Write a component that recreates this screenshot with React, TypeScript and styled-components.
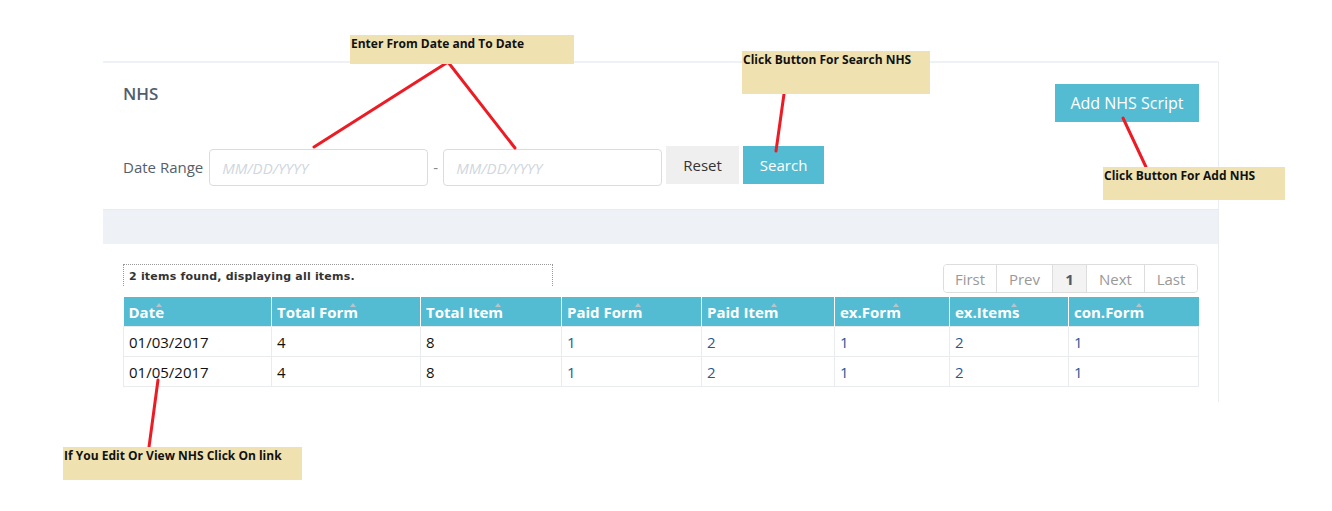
import styled, { createGlobalStyle } from 'styled-components';

const Global = createGlobalStyle`
    body{
        margin: 0;
        background: #fff;
        font-family: 'Open Sans', 'Noto Sans', sans-serif;
    }
`

const Page = styled.div`
    position: relative;
    width: 1332px;
    height: 511px;
    padding: 61px 0 0 103px;
    box-sizing: border-box;
`

const Panel = styled.div`
    width: 1116px;
    border-top: 2px solid #eef1f5;
    border-right: 1px solid #e9edf1;
    box-sizing: border-box;
    padding-bottom: 15px;
`

const Top = styled.div`
    display: flex;
    justify-content: space-between;
    align-items: flex-start;
    padding: 19px 19px 23px 20px;
`

const Title = styled.h3`
    margin: 0;
    font-size: 17px;
    line-height: 24px;
    font-weight: 600;
    color: #515d6b;
`

const FilterRow = styled.div`
    display: flex;
    align-items: flex-start;
    margin-top: 40px;
`

const Label = styled.span`
    font-size: 15px;
    line-height: 20px;
    color: #555f6b;
    margin: 11px 6px 0 0;
`

const DateInput = styled.input`
    width: 219px;
    height: 37px;
    margin-top: 3px;
    box-sizing: border-box;
    border: 1px solid #dcdcdc;
    border-radius: 4px;
    padding: 0 12px;
    font-family: inherit;
    font-size: 15px;
    outline: none;

    &::placeholder{
        color: #cfd7e0;
        font-style: italic;
    }
`

const Dash = styled.span`
    width: 15px;
    text-align: center;
    color: #888;
    font-size: 15px;
    margin-top: 11px;
`

const Button = styled.button<{primary?: boolean}>`
    height: 38px;
    border: none;
    border-radius: 0;
    padding: 0 17px;
    font-family: inherit;
    font-size: 15px;
    cursor: pointer;
    background: ${p=>p.primary?"#53bcd3":"#efefef"};
    color: ${p=>p.primary?"#fff":"#333"};
    margin-left: 4px;
`

const AddButton = styled(Button)`
    margin-top: 2px;
    width: 144px;
    padding: 0;
    font-size: 16px;
`

const GrayBar = styled.div`
    height: 35px;
    background: #eef1f5;
    border-top: 1px solid #e8ebef;
    box-sizing: border-box;
`

const Body = styled.div`
    padding: 20px 20px 0 20px;
`

const InfoRow = styled.div`
    display: flex;
    justify-content: space-between;
    align-items: flex-start;
    margin-bottom: 4px;
`

const Info = styled.div`
    width: 430px;
    height: 22px;
    box-sizing: border-box;
    border: 1px dotted #999;
    border-bottom: none;
    padding: 5px 5px 0;
    font-family: 'DejaVu Sans', Verdana, sans-serif;
    font-weight: bold;
    font-size: 11px;
    letter-spacing: 0.2px;
    color: #333;
`

const Pager = styled.div`
    display: flex;
    border: 1px solid #dddddd;
    border-radius: 4px;
    overflow: hidden;
    height: 29px;
    box-sizing: border-box;
`

const PageItem = styled.span<{active?: boolean; w: number}>`
    width: ${p=>p.w}px;
    box-sizing: border-box;
    display: flex;
    align-items: center;
    justify-content: center;
    font-size: 15px;
    color: ${p=>p.active?"#4e5a66":"#999"};
    font-weight: ${p=>p.active?700:400};
    background: ${p=>p.active?"#f3f3f3":"#fff"};
    & + &{
        border-left: 1px solid #dddddd;
    }
`

const Table = styled.table`
    width: 1075px;
    border-collapse: collapse;
    table-layout: fixed;
`

const Th = styled.th`
    position: relative;
    background: #53bcd3;
    color: #fff;
    font-size: 15px;
    font-weight: 700;
    text-align: left;
    height: 29px;
    padding: 0 5px;
    border-left: 1px solid #fff;
    &:first-child{ border-left: none; }
`

const Sort = styled.span`
    position: relative;
    &::after{
        content: '';
        position: absolute;
        right: 2px;
        top: -2px;
        border: 3px solid transparent;
        border-bottom: 4px solid #b9c3c9;
    }
`

const Td = styled.td<{link?: boolean}>`
    height: 29px;
    padding: 0 5px;
    font-size: 15px;
    border: 1px solid #e9ecef;
    color: ${p=>p.link?"#1f5c94":"#111"};
`

const Note = styled.div<{x:number; y:number; w:number; h:number}>`
    position: absolute;
    left: ${p=>p.x}px;
    top: ${p=>p.y}px;
    width: ${p=>p.w}px;
    height: ${p=>p.h}px;
    background: #efe2b0;
    font-size: 12px;
    font-weight: 700;
    line-height: 18px;
    color: #111;
    padding-left: 1px;
    box-sizing: border-box;
    white-space: nowrap;
`

const Lines = styled.svg`
    position: absolute;
    left: 0;
    top: 0;
    pointer-events: none;
`

const columns = [
    {name:"Date", w:148},
    {name:"Total Form", w:149},
    {name:"Total Item", w:141},
    {name:"Paid Form", w:140},
    {name:"Paid Item", w:133},
    {name:"ex.Form", w:115},
    {name:"ex.Items", w:119},
    {name:"con.Form", w:130},
]

const rows = [
    ["01/03/2017","4","8","1","2","1","2","1"],
    ["01/05/2017","4","8","1","2","1","2","1"],
]

const pages = [
    {label:"First", w:52},
    {label:"Prev", w:56},
    {label:"1", w:34, active:true},
    {label:"Next", w:58},
    {label:"Last", w:53},
]

export default function App(){
    return(
        <Page>
            <Global />
            <Panel>
                <Top>
                    <div>
                        <Title>NHS</Title>
                        <FilterRow>
                            <Label>Date Range</Label>
                            <DateInput placeholder="MM/DD/YYYY" />
                            <Dash>-</Dash>
                            <DateInput placeholder="MM/DD/YYYY" />
                            <Button>Reset</Button>
                            <Button primary>Search</Button>
                        </FilterRow>
                    </div>
                    <AddButton primary>Add NHS Script</AddButton>
                </Top>
                <GrayBar />
                <Body>
                    <InfoRow>
                        <Info>2 items found, displaying all items.</Info>
                        <Pager>
                            {pages.map(p=>(
                                <PageItem key={p.label} w={p.w} active={p.active}>{p.label}</PageItem>
                            ))}
                        </Pager>
                    </InfoRow>
                    <Table>
                        <colgroup>
                            {columns.map(c=><col key={c.name} style={{width:c.w}} />)}
                        </colgroup>
                        <thead>
                            <tr>
                                {columns.map(c=><Th key={c.name}><Sort>{c.name}</Sort></Th>)}
                            </tr>
                        </thead>
                        <tbody>
                            {rows.map((r,i)=>(
                                <tr key={i}>
                                    {r.map((v,j)=><Td key={j} link={j>=3}>{v}</Td>)}
                                </tr>
                            ))}
                        </tbody>
                    </Table>
                </Body>
            </Panel>

            <Lines width="1332" height="511">
                <g stroke="#ed1c24" strokeWidth="3" fill="none" strokeLinecap="round">
                    <polyline points="314,147 448,62 515,148" />
                    <line x1="784" y1="94" x2="776" y2="151" />
                    <line x1="1123" y1="118" x2="1146" y2="167" />
                    <line x1="158" y1="380" x2="149" y2="447" />
                </g>
            </Lines>

            <Note x={350} y={35} w={224} h={29}>Enter From Date and To Date</Note>
            <Note x={742} y={51} w={188} h={43}>Click Button For Search NHS</Note>
            <Note x={1103} y={167} w={182} h={33}>Click Button For Add NHS</Note>
            <Note x={63} y={447} w={239} h={33}>If You Edit Or View NHS Click On link</Note>
        </Page>
    )
}
